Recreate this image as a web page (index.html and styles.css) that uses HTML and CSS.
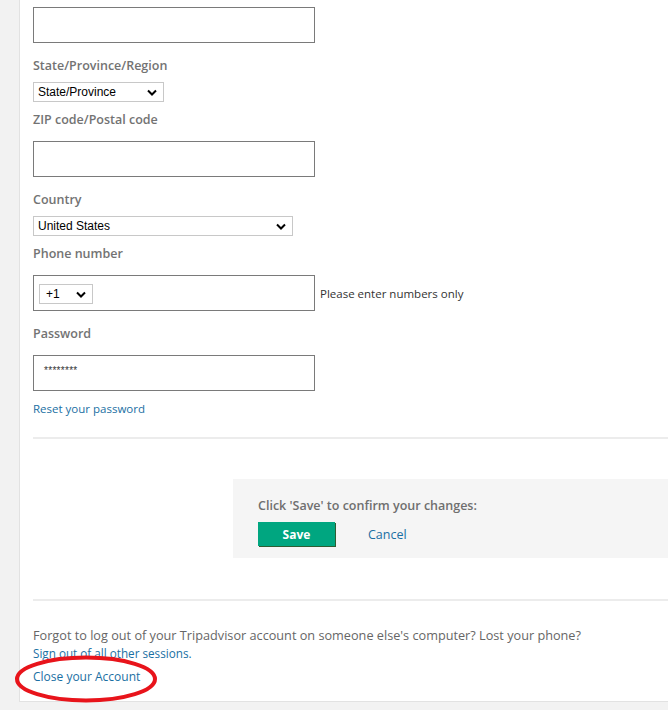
FILE: index.html
```html
<!DOCTYPE html>
<html>
<head>
<meta charset="utf-8">
<link rel="stylesheet" href="styles.css">
</head>
<body>
<div class="page">
  <div class="form">
    <input class="text-input first" type="text">
    <div class="label">State/Province/Region</div>
    <select class="sel sel-state"><option>State/Province</option></select>
    <div class="label after-select">ZIP code/Postal code</div>
    <input class="text-input" type="text">
    <div class="label">Country</div>
    <select class="sel sel-country"><option>United States</option></select>
    <div class="label after-select">Phone number</div>
    <div class="phone-row">
      <div class="phone-box">
        <select class="sel sel-code"><option>+1</option></select>
      </div>
      <span class="hint">Please enter numbers only</span>
    </div>
    <div class="label">Password</div>
    <div class="text-input pw">********</div>
    <a class="link reset" href="#">Reset your password</a>
  </div>
  <hr class="rule rule-top">
  <div class="save-wrap">
    <div class="save-box">
      <div class="save-title">Click 'Save' to confirm your changes:</div>
      <div class="save-actions">
        <button class="save-btn">Save</button>
        <a class="link cancel" href="#">Cancel</a>
      </div>
    </div>
  </div>
  <hr class="rule rule-bottom">
  <div class="sessions">
    <p class="forgot">Forgot to log out of your Tripadvisor account on someone else's computer? Lost your phone?</p>
    <a class="link signout" href="#">Sign out of all other sessions.</a>
    <a class="link close" href="#">Close your Account</a>
    <svg class="circle" width="150" height="52" viewBox="0 0 150 52"><ellipse cx="72" cy="25" rx="69" ry="21.5" fill="none" stroke="#e8141b" stroke-width="4"/></svg>
  </div>
</div>
</body>
</html>
```
FILE: styles.css
```css
html, body {
  margin: 0;
  padding: 0;
}
body {
  background: #f2f2f2;
  font-family: "Open Sans", "Lato", sans-serif;
  width: 668px;
  height: 710px;
  overflow: hidden;
}
.page {
  margin-left: 19px;
  width: 649px;
  height: 702px;
  background: #fff;
  border-left: 1px solid #e2e2e2;
  border-bottom: 1px solid #e2e2e2;
  padding-top: 7px;
  box-sizing: border-box;
}
.form {
  padding-left: 13px;
  display: flex;
  flex-direction: column;
  align-items: flex-start;
}
.text-input {
  box-sizing: border-box;
  width: 282px;
  height: 36px;
  border: 1px solid #7a7a7a;
  border-radius: 0;
  margin: 0;
  padding: 0 10px;
  background: #fff;
}
.label {
  font-size: 12.5px;
  line-height: 18px;
  font-weight: 600;
  color: #737373;
  margin-top: 14px;
  margin-bottom: 12px;
}
.label.after-select {
  margin-top: 9px;
}
.sel {
  font-family: "Liberation Sans", Arial, sans-serif;
  font-size: 12px;
  height: 20px;
  box-sizing: border-box;
  border: 1px solid #c8c8c8;
  background: #fff;
  color: #000;
  padding: 0 2px 0 4px;
  margin: -5px 0 0 0;
  appearance: none;
  -webkit-appearance: none;
  background-image: url("data:image/svg+xml;utf8,<svg xmlns='http://www.w3.org/2000/svg' width='10' height='7' viewBox='0 0 10 7'><path d='M1 1.5 L5 5.5 L9 1.5' fill='none' stroke='black' stroke-width='2'/></svg>");
  background-repeat: no-repeat;
  background-position: right 6px center;
}
.sel-state { width: 131px; }
.sel-country { width: 260px; }
.phone-row {
  display: flex;
  align-items: center;
  gap: 5px;
}
.phone-box {
  box-sizing: border-box;
  width: 282px;
  height: 36px;
  border: 1px solid #7a7a7a;
  padding: 5px 0 0 5px;
}
.sel-code {
  margin: 0;
  width: 54px;
  padding-left: 6px;
}
.hint {
  font-size: 11.5px;
  color: #333;
}
.pw {
  font-family: "Liberation Sans", Arial, sans-serif;
  font-size: 10px;
  color: #333;
  line-height: 30px;
  letter-spacing: 0.3px;
}
.link {
  color: #1a6fa3;
  text-decoration: none;
  font-size: 11.5px;
}
.reset {
  margin-top: 10px;
  line-height: 16px;
}
.rule {
  border: 0;
  height: 2px;
  background: #ececec;
  margin: 0 0 0 13px;
}
.rule-top { margin-top: 20px; }
.save-wrap {
  display: flex;
  margin-top: 40px;
  padding-left: 213px;
}
.save-box {
  flex: 1;
  height: 79px;
  background: #f5f5f5;
  box-sizing: border-box;
  padding: 19px 0 0 25px;
}
.save-title {
  font-size: 12.5px;
  font-weight: 600;
  color: #6f6f6f;
  line-height: 16px;
}
.save-actions {
  display: flex;
  align-items: center;
  margin-top: 8px;
}
.save-btn {
  width: 77px;
  height: 24px;
  background: #00a680;
  border: 0;
  box-shadow: 1px 1px 0 #2f5d32;
  color: #fff;
  font-family: inherit;
  font-weight: 700;
  font-size: 12px;
  padding: 0;
}
.cancel {
  margin-left: 33px;
  font-size: 12.5px;
}
.rule-bottom { margin-top: 41px; }
.sessions {
  position: relative;
  padding: 25px 0 0 13px;
  display: flex;
  flex-direction: column;
  align-items: flex-start;
}
.forgot {
  margin: 0;
  font-size: 12.7px;
  color: #666;
  line-height: 18px;
}
.signout { line-height: 16px; margin-top: 1px; font-size: 11.7px; }
.close { line-height: 16px; margin-top: 8px; font-size: 12px; }
.circle {
  position: absolute;
  left: -6px;
  top: 53px;
}
```
